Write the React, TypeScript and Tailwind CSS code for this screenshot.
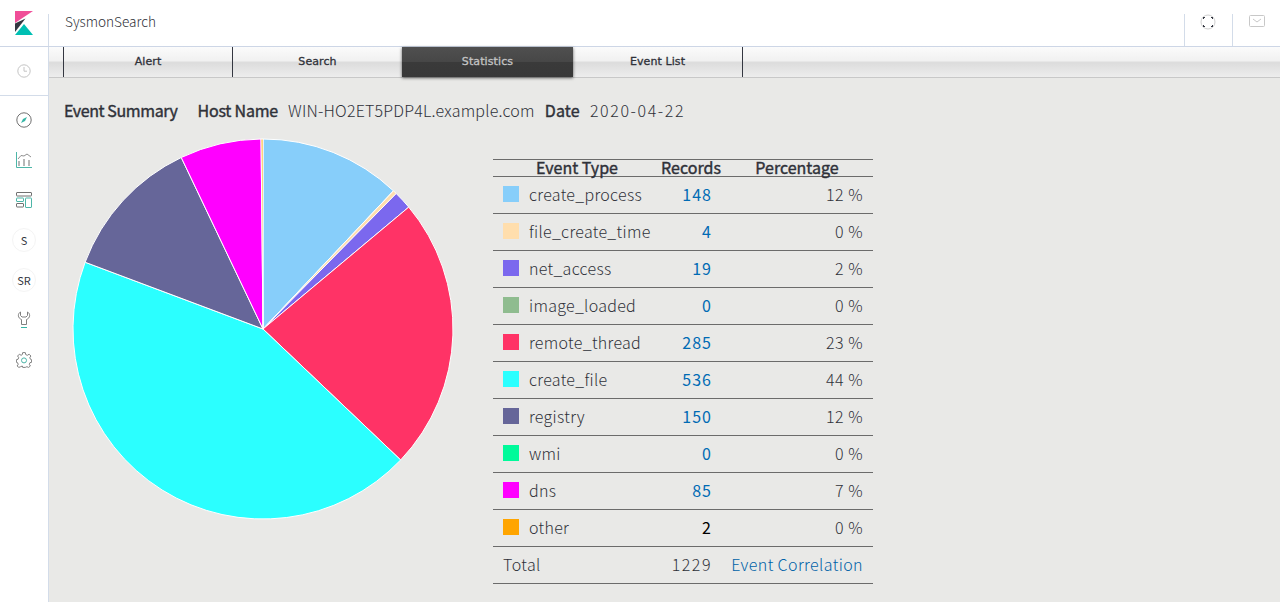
import React from "react";

const rows = [
  { name: "create_process", value: 148, pct: "12 %", color: "#87cefa" },
  { name: "file_create_time", value: 4, pct: "0 %", color: "#ffdead" },
  { name: "net_access", value: 19, pct: "2 %", color: "#7b68ee" },
  { name: "image_loaded", value: 0, pct: "0 %", color: "#8fbc8f" },
  { name: "remote_thread", value: 285, pct: "23 %", color: "#ff3366" },
  { name: "create_file", value: 536, pct: "44 %", color: "#2bffff" },
  { name: "registry", value: 150, pct: "12 %", color: "#666699" },
  { name: "wmi", value: 0, pct: "0 %", color: "#00fa9a" },
  { name: "dns", value: 85, pct: "7 %", color: "#ff00ff" },
  { name: "other", value: 2, pct: "0 %", color: "#ffa500" },
];

function Pie() {
  const total = rows.reduce((s, r) => s + r.value, 0);
  const cx = 191;
  const cy = 191;
  const r = 190;
  let a = 0;
  return (
    <svg width="382" height="382" viewBox="0 0 382 382" className="block shrink-0">
      {rows.filter((x) => x.value > 0).map((x) => {
        const s = a;
        a += (x.value / total) * Math.PI * 2;
        const x1 = cx + r * Math.sin(s);
        const y1 = cy - r * Math.cos(s);
        const x2 = cx + r * Math.sin(a);
        const y2 = cy - r * Math.cos(a);
        const large = a - s > Math.PI ? 1 : 0;
        return (
          <path
            key={x.name}
            d={`M${cx} ${cy}L${x1} ${y1}A${r} ${r} 0 ${large} 1 ${x2} ${y2}Z`}
            fill={x.color}
            stroke="#fff"
            strokeWidth="1"
          />
        );
      })}
    </svg>
  );
}

const Logo = () => (
  <svg width="18" height="24" viewBox="0 0 18 24">
    <path d="M0 0H18L0 12Z" fill="#f04e98" />
    <path d="M0 12.5L10.5 7.5L0 21Z" fill="#343741" />
    <path d="M0 24L9 13L18 24Z" fill="#00bfb3" />
  </svg>
);

const Nav = ({ children }: { children: React.ReactNode }) => (
  <div className="h-10 flex items-center justify-center">{children}</div>
);

const Circle = ({ t }: { t: string }) => (
  <div className="w-6 h-6 rounded-full border border-[#f4f4f4] flex items-center justify-center text-[11px] font-normal text-[#343741]">{t}</div>
);

const tabText = "text-[11px] font-normal tracking-[0.1px] font-['DejaVu_Sans',sans-serif] [-webkit-text-stroke:0.3px]";
const boldText = "font-normal [-webkit-text-stroke:0.4px]";

export default function App() {
  return (
    <div className="w-[1280px] h-[602px] overflow-hidden flex flex-col bg-white font-['Noto_Sans_CJK_JP','Noto_Sans',sans-serif] font-light text-[#2f3139]">
      <header className="h-[47px] shrink-0 flex border-b border-[#cdd6e6] bg-white">
        <div className="w-[48px] flex items-center justify-center">
          <Logo />
        </div>
        <div className="flex-1 mt-[14px] border-l border-[#d3dce9] pl-4">
          <div className="text-[13.6px] leading-[15px]">SysmonSearch</div>
        </div>
        <div className="w-[48px] mt-[14px] border-l border-[#d3dce9] flex justify-center">
          <svg width="16" height="16" viewBox="0 0 16 16" fill="none" className="-ml-px">
            <circle cx="8" cy="8" r="7" stroke="#cfcfcf" />
            <path d="M3 3.5H5M3.5 3V5M13 3.5H11M12.5 3V5M13 12.5H11M12.5 13V11M3 12.5H5M3.5 13V11" stroke="#343741" />
          </svg>
        </div>
        <div className="w-[48px] mt-[14px] border-l border-[#d3dce9] flex justify-center">
          <svg width="16" height="14" viewBox="0 0 16 14" fill="none" stroke="#c8c8c8">
            <rect x="0.5" y="1.5" width="15" height="11" rx="1" />
            <path d="M4 5L8 8L12 5" />
          </svg>
        </div>
      </header>
      <div className="flex-1 flex min-h-0">
        <aside className="w-[49px] shrink-0 bg-white border-r border-[#d3dce9]">
          <div className="h-[49px] flex items-center justify-center border-b border-[#d3dce9]">
            <svg width="14" height="14" viewBox="0 0 14 14" fill="none" stroke="#c4c4c4">
              <circle cx="7" cy="7" r="6.2" />
              <path d="M7 3V7.2H10" />
            </svg>
          </div>
          <div className="pt-[4px]">
            <Nav>
              <svg width="16" height="16" viewBox="0 0 16 16" fill="none">
                <circle cx="8" cy="8" r="7.2" stroke="#707070" />
                <path d="M11 5L9 9L5 11L7 7Z" fill="#35b5a5" />
              </svg>
            </Nav>
            <Nav>
              <svg width="16" height="16" viewBox="0 0 16 16" fill="none">
                <path d="M0.5 0V15.5H16" stroke="#4db6a8" />
                <path d="M3 9V14M8 7V14M13 8V14" stroke="#707070" />
                <path d="M2 7L5 3.5L8 4L11 2L15 5" stroke="#909090" />
              </svg>
            </Nav>
            <Nav>
              <svg width="16" height="16" viewBox="0 0 16 16" fill="none">
                <rect x="0.5" y="0.5" width="15" height="3.5" rx="0.5" stroke="#707070" />
                <rect x="0.5" y="6" width="7" height="3.5" rx="0.5" stroke="#4db6a8" />
                <rect x="0.5" y="11.5" width="7" height="3.5" rx="0.5" stroke="#707070" />
                <rect x="9.5" y="6" width="6" height="9.5" rx="0.5" stroke="#4db6a8" />
              </svg>
            </Nav>
            <Nav><Circle t="S" /></Nav>
            <Nav><Circle t="SR" /></Nav>
            <Nav>
              <svg width="16" height="18" viewBox="0 0 16 18" fill="none" stroke="#808080">
                <path d="M4.5 1C1.5 2.5 1.5 7 5.5 8.5V13.5H10.5V8.5C14.5 7 14.5 2.5 11.5 1V4.5L10 6H6L4.5 4.5Z" />
                <path d="M5 16.5H11" stroke="#35b5a5" />
              </svg>
            </Nav>
            <Nav>
              <svg width="16" height="16" viewBox="0 0 16 16" fill="none">
                <path d="M6.7 0.6H9.3L9.7 2.6L11.4 3.3L13.1 2.2L14.9 4L13.8 5.7L14.5 7.3L15.6 7.7V10.3L14 10.6L13.3 12.3L14.4 14L12.6 15.4L10.9 14.7L9.3 15.4H6.7L6.3 14L4.6 14.7L2.9 15.4L1.1 14L2.2 12.3L1.5 10.6L0.4 10.3V7.7L2 7.3L2.7 5.7L1.6 4L3.4 2.2L5.1 3.3L6.3 2.6Z" stroke="#808080" />
                <circle cx="8" cy="8.4" r="2.5" stroke="#4db6a8" />
              </svg>
            </Nav>
          </div>
        </aside>
        <main className="flex-1 bg-[#e9e9e7] min-w-0">
          <div className="h-[31px] flex pl-[14px] border-b border-[#c8c8c8] bg-[linear-gradient(#fbfbfb,#f1f1f1_45%,#dcdcdc_52%,#ededed)]">
            <div className={`w-[169px] border-l border-[#343741] flex items-center justify-center ${tabText}`}>Alert</div>
            <div className={`w-[170px] border-l border-[#343741] flex items-center justify-center ${tabText}`}>Search</div>
            <div className={`w-[171px] flex items-center justify-center text-[#c4c4c4] bg-[linear-gradient(#4f4f4f,#474747_50%,#3a3a3a_50%,#383838)] shadow-[0_1px_3px_rgba(0,0,0,0.6)] ${tabText}`}>Statistics</div>
            <div className={`w-[170px] border-r border-[#343741] flex items-center justify-center ${tabText}`}>Event List</div>
          </div>
          <div className="pl-[15px] pt-[21px] flex items-baseline text-base leading-[22px]">
            <span className={`${boldText} tracking-[-0.4px] mr-5`}>Event Summary</span>
            <span className={`${boldText} tracking-[-0.2px] mr-[10px]`}>Host Name</span>
            <span className="tracking-[0.2px] mr-[10px]">WIN-HO2ET5PDP4L.example.com</span>
            <span className={`${boldText} tracking-[0.2px] mr-[10px]`}>Date</span>
            <span className="tracking-[1.6px]">2020-04-22</span>
          </div>
          <div className="flex pl-[23px] pt-[17px]">
            <Pie />
            <table className="ml-[39px] mt-[21px] self-start w-[380px] table-fixed border-collapse text-base">
              <colgroup>
                <col className="w-[168px]" />
                <col className="w-[60px]" />
                <col className="w-[152px]" />
              </colgroup>
              <thead>
                <tr className="border-y border-[#6b6b6b]">
                  <th className={`${boldText} leading-[14px] p-0 pb-[2px]`}>Event Type</th>
                  <th className={`${boldText} leading-[14px] p-0 pb-[2px]`}>Records</th>
                  <th className={`${boldText} leading-[14px] p-0 pb-[2px]`}>Percentage</th>
                </tr>
              </thead>
              <tbody>
                {rows.map((r) => (
                  <tr key={r.name} className="border-b border-[#6b6b6b] h-[37px]">
                    <td className="pl-[10px] pb-[2px] whitespace-nowrap">
                      <span className="flex items-center gap-[10px] tracking-[0.3px]">
                        <span className="w-4 h-4 shrink-0" style={{ backgroundColor: r.color }} />
                        {r.name}
                      </span>
                    </td>
                    <td className={`text-right pr-[9px] pb-[2px] font-normal tracking-[1px] ${r.name === "other" ? "text-black" : "text-[#006bb4]"}`}>{r.value}</td>
                    <td className="text-right pr-[10px] pb-[2px] tracking-[0.5px]">{r.pct}</td>
                  </tr>
                ))}
                <tr className="border-b border-[#6b6b6b] h-[37px]">
                  <td className="pl-[10px] pb-[2px] tracking-[0.4px]">Total</td>
                  <td className="text-right pr-[9px] pb-[2px] tracking-[1.5px]">1229</td>
                  <td className="text-right pr-[10px] pb-[2px] tracking-[0.4px] text-[#0062a8]">Event Correlation</td>
                </tr>
              </tbody>
            </table>
          </div>
        </main>
      </div>
    </div>
  );
}
